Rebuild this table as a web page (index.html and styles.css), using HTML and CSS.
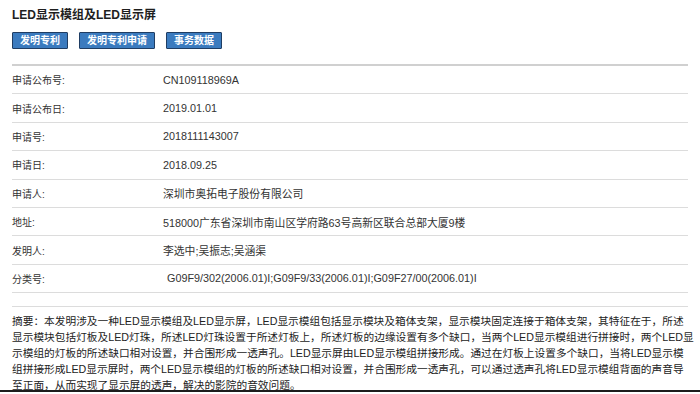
FILE: index.html
```html
<!DOCTYPE html>
<html lang="zh-CN">
<head>
<meta charset="utf-8">
<title>LED显示模组及LED显示屏</title>
<link rel="stylesheet" href="styles.css">
</head>
<body>
<div class="page">
  <h1 class="title">LED显示模组及LED显示屏</h1>
  <div class="tabs">
    <span class="tab">发明专利</span>
    <span class="tab">发明专利申请</span>
    <span class="tab">事务数据</span>
  </div>
  <div class="info">
    <div class="row"><span class="label">申请公布号:</span><span class="value">CN109118969A</span></div>
    <div class="row"><span class="label">申请公布日:</span><span class="value">2019.01.01</span></div>
    <div class="row"><span class="label">申请号:</span><span class="value">2018111143007</span></div>
    <div class="row"><span class="label">申请日:</span><span class="value">2018.09.25</span></div>
    <div class="row"><span class="label">申请人:</span><span class="value">深圳市奥拓电子股份有限公司</span></div>
    <div class="row"><span class="label">地址:</span><span class="value">518000广东省深圳市南山区学府路63号高新区联合总部大厦9楼</span></div>
    <div class="row"><span class="label">发明人:</span><span class="value">李选中;吴振志;吴涵渠</span></div>
    <div class="row"><span class="label">分类号:</span><span class="value class-code">G09F9/302(2006.01)I;G09F9/33(2006.01)I;G09F27/00(2006.01)I</span></div>
    <div class="spacer"></div>
  </div>
  <p class="abstract">摘要：本发明涉及一种LED显示模组及LED显示屏，LED显示模组包括显示模块及箱体支架，显示模块固定连接于箱体支架，其特征在于，所述<br>显示模块包括灯板及LED灯珠，所述LED灯珠设置于所述灯板上，所述灯板的边缘设置有多个缺口，当两个LED显示模组进行拼接时，两个LED显<br>示模组的灯板的所述缺口相对设置，并合围形成一透声孔。LED显示屏由LED显示模组拼接形成。通过在灯板上设置多个缺口，当将LED显示模<br>组拼接形成LED显示屏时，两个LED显示模组的灯板的所述缺口相对设置，并合围形成一透声孔，可以通过透声孔将LED显示模组背面的声音导<br>至正面，从而实现了显示屏的透声，解决的影院的音效问题。</p>
</div>
<div class="bottom-bar"></div>
</body>
</html>
```

FILE: styles.css
```css
html, body {
  margin: 0;
  padding: 0;
  background: #ffffff;
}

body {
  font-family: "Liberation Sans", "Noto Sans CJK SC", sans-serif;
  color: #333333;
  overflow: hidden;
  height: 394px;
}

.page {
  padding: 7px 12px 0 12px;
}

.title {
  margin: 0;
  font-size: 12px;
  line-height: 16px;
  font-weight: bold;
  color: #1e1e1e;
}

.tabs {
  display: flex;
  gap: 11px;
  margin-top: 9px;
}

.tab {
  display: inline-flex;
  align-items: center;
  justify-content: center;
  height: 15px;
  padding: 0 7px;
  background: #3b7bbf;
  border: 1px solid #1f3d63;
  border-radius: 1px;
  color: #ffffff;
  font-size: 10px;
  font-weight: bold;
  line-height: 15px;
}

.info {
  margin-top: 15px;
  border-top: 2px solid #d0d0d0;
}

.row {
  display: grid;
  grid-template-columns: 151px 1fr;
  align-items: center;
  height: 27.4px;
  border-bottom: 1px solid #dcdcdc;
}

.label {
  font-size: 10px;
  color: #333333;
}

.value {
  font-size: 10.8px;
  color: #333333;
}

.class-code {
  padding-left: 4px;
}

.spacer {
  height: 13px;
  border-bottom: 1px solid #dcdcdc;
}

.abstract {
  margin: 0;
  padding-top: 6px;
  height: 77px;
  font-size: 10.7px;
  line-height: 16px;
  white-space: nowrap;
  color: #222222;
}

.bottom-bar {
  height: 2px;
  background: #1c1c1c;
}
```
